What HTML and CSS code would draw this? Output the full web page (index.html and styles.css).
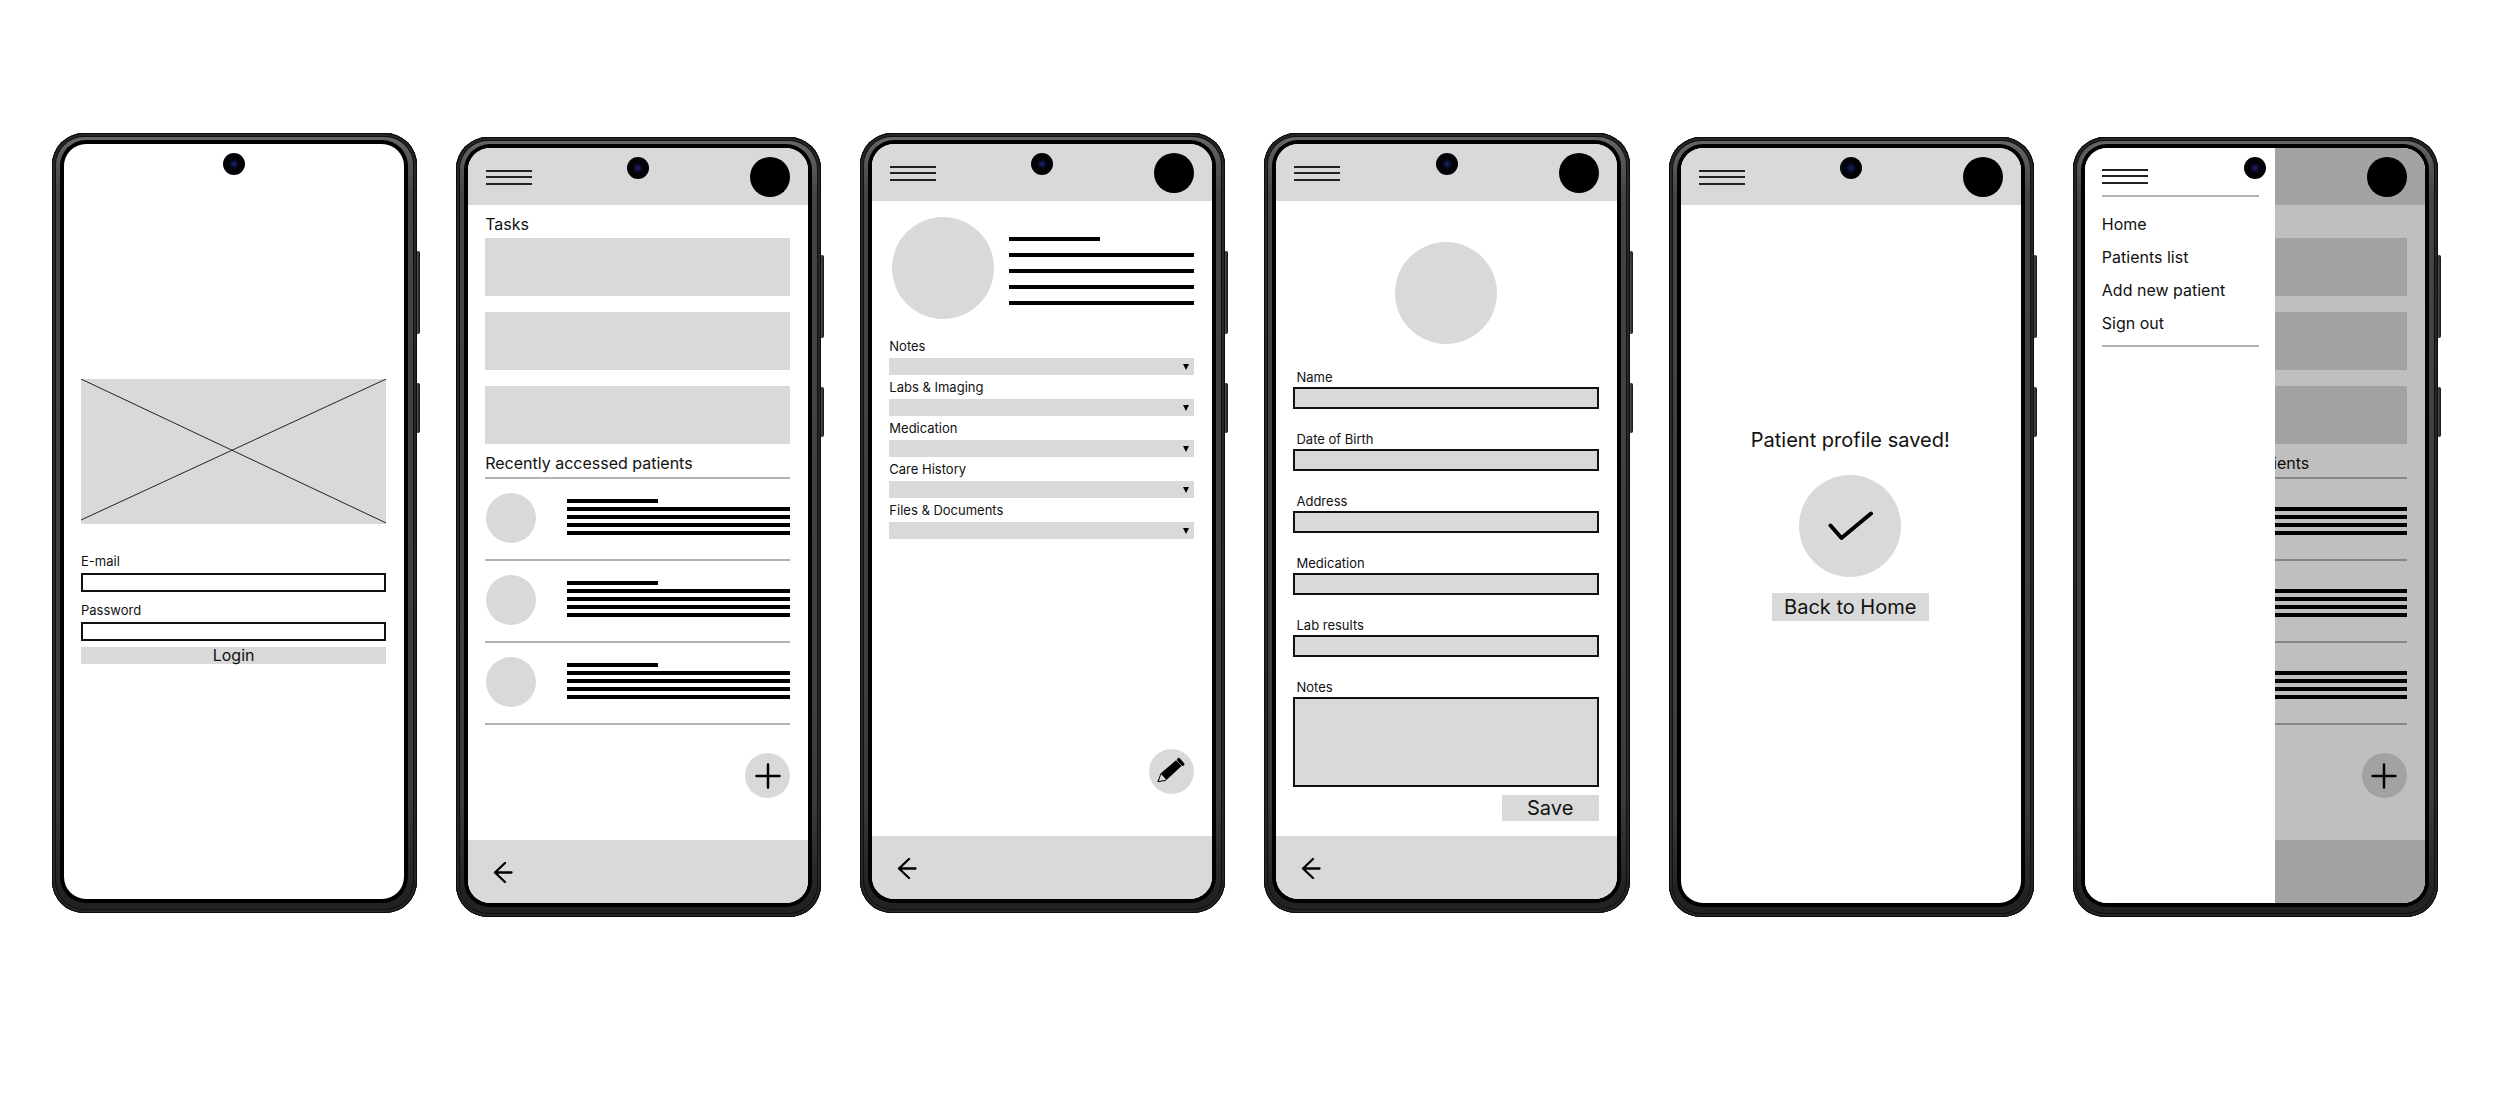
FILE: index.html
```html
<!DOCTYPE html>
<html lang="en">
<head>
    <meta charset="UTF-8">
    <meta name="viewport" content="width=device-width, initial-scale=1">
    <title>Patient App Wireframes</title>
    <link rel="stylesheet" href="styles.css">
</head>
<body>
    <!-- Shared icons -->
    <svg class="icon-defs" aria-hidden="true">
        <symbol id="icon-menu" viewBox="0 0 46 16">
            <path d="M0 2h46M0 8h46M0 15h46" stroke="#222" stroke-width="2"/>
        </symbol>
        <symbol id="icon-back" viewBox="0 0 20 22">
            <path d="M12 2 2 11.500 12 21M2 11.500h16.500" fill="none" stroke="#000" stroke-width="2.300" stroke-linecap="round" stroke-linejoin="round"/>
        </symbol>
        <symbol id="icon-plus" viewBox="0 0 26 26">
            <path d="M13 1.500v23M1.500 13h23" stroke="#000" stroke-width="2.500" stroke-linecap="round"/>
        </symbol>
        <symbol id="icon-pencil" viewBox="0 0 45 45">
            <path d="M27 11.300 32.500 17 17.500 31 11.500 24.500Z"/>
            <path d="M11.800 25 9 32.700 17 31.300" fill="none" stroke="#000" stroke-width="1"/>
            <path d="M9 30.500 8.500 33.200 11 32.500Z"/>
            <path d="M29.700 10.700 33.600 15.200" stroke="#000" stroke-width="3.500" stroke-linecap="round"/>
        </symbol>
        <symbol id="icon-check" viewBox="0 0 46 30">
            <path d="M3.500 14.500 14.500 27 44 2.500" fill="none" stroke="#000" stroke-width="4" stroke-linecap="round" stroke-linejoin="round"/>
        </symbol>
    </svg>

    <main class="board">
        <!-- Login -->
        <section class="phone">
            <div class="screen">
                <span class="camera"></span>
                <form class="content login">
                    <svg class="logo" viewBox="0 0 306 145" preserveAspectRatio="none" role="img" aria-label="Logo">
                        <path d="M0 0 306 144M0 141 306 0" stroke="#222" stroke-width="1"/>
                    </svg>
                    <div class="login-field">
                        <label for="email">E-mail</label>
                        <input id="email" type="email">
                    </div>
                    <div class="login-field">
                        <label for="password">Password</label>
                        <input id="password" type="password">
                    </div>
                    <button class="btn btn-login" type="button">Login</button>
                </form>
            </div>
        </section>

        <!-- Home -->
        <section class="phone low">
            <div class="screen">
                <span class="camera"></span>
                <header class="topbar">
                    <button class="icon-btn" type="button" aria-label="Menu"><svg class="menu-icon"><use href="#icon-menu"/></svg></button>
                    <button class="account" type="button" aria-label="Account"></button>
                </header>
                <div class="content">
                    <h2>Tasks</h2>
                    <div class="tasks">
                        <div class="task"></div>
                        <div class="task"></div>
                        <div class="task"></div>
                    </div>
                    <h2>Recently accessed patients</h2>
                    <ul class="patients">
                        <li>
                            <span class="avatar"></span>
                            <div class="lines"><i></i><i></i><i></i><i></i><i></i></div>
                        </li>
                        <li>
                            <span class="avatar"></span>
                            <div class="lines"><i></i><i></i><i></i><i></i><i></i></div>
                        </li>
                        <li>
                            <span class="avatar"></span>
                            <div class="lines"><i></i><i></i><i></i><i></i><i></i></div>
                        </li>
                    </ul>
                    <button class="fab" type="button" aria-label="Add patient"><svg class="plus-icon"><use href="#icon-plus"/></svg></button>
                </div>
                <footer class="bottombar">
                    <button class="icon-btn" type="button" aria-label="Back"><svg class="back-icon"><use href="#icon-back"/></svg></button>
                </footer>
            </div>
        </section>

        <!-- Patient profile -->
        <section class="phone">
            <div class="screen">
                <span class="camera"></span>
                <header class="topbar">
                    <button class="icon-btn" type="button" aria-label="Menu"><svg class="menu-icon"><use href="#icon-menu"/></svg></button>
                    <button class="account" type="button" aria-label="Account"></button>
                </header>
                <div class="content">
                    <div class="profile">
                        <span class="photo"></span>
                        <div class="lines wide"><i></i><i></i><i></i><i></i><i></i></div>
                    </div>
                    <div class="sections">
                        <label for="s-notes">Notes</label>
                        <select id="s-notes"><option></option></select>
                        <label for="s-labs">Labs &amp; Imaging</label>
                        <select id="s-labs"><option></option></select>
                        <label for="s-medication">Medication</label>
                        <select id="s-medication"><option></option></select>
                        <label for="s-history">Care History</label>
                        <select id="s-history"><option></option></select>
                        <label for="s-files">Files &amp; Documents</label>
                        <select id="s-files"><option></option></select>
                    </div>
                    <button class="fab" type="button" aria-label="Edit"><svg class="pencil-icon"><use href="#icon-pencil"/></svg></button>
                </div>
                <footer class="bottombar">
                    <button class="icon-btn" type="button" aria-label="Back"><svg class="back-icon"><use href="#icon-back"/></svg></button>
                </footer>
            </div>
        </section>

        <!-- Add new patient -->
        <section class="phone">
            <div class="screen">
                <span class="camera"></span>
                <header class="topbar">
                    <button class="icon-btn" type="button" aria-label="Menu"><svg class="menu-icon"><use href="#icon-menu"/></svg></button>
                    <button class="account" type="button" aria-label="Account"></button>
                </header>
                <form class="content patient-form">
                    <span class="photo"></span>
                    <div class="field">
                        <label for="name">Name</label>
                        <input id="name" type="text">
                    </div>
                    <div class="field">
                        <label for="dob">Date of Birth</label>
                        <input id="dob" type="text">
                    </div>
                    <div class="field">
                        <label for="address">Address</label>
                        <input id="address" type="text">
                    </div>
                    <div class="field">
                        <label for="medication">Medication</label>
                        <input id="medication" type="text">
                    </div>
                    <div class="field">
                        <label for="lab">Lab results</label>
                        <input id="lab" type="text">
                    </div>
                    <div class="field">
                        <label for="notes">Notes</label>
                        <textarea id="notes"></textarea>
                    </div>
                    <button class="btn btn-save" type="button">Save</button>
                </form>
                <footer class="bottombar">
                    <button class="icon-btn" type="button" aria-label="Back"><svg class="back-icon"><use href="#icon-back"/></svg></button>
                </footer>
            </div>
        </section>

        <!-- Saved confirmation -->
        <section class="phone low">
            <div class="screen">
                <span class="camera"></span>
                <header class="topbar">
                    <button class="icon-btn" type="button" aria-label="Menu"><svg class="menu-icon"><use href="#icon-menu"/></svg></button>
                    <button class="account" type="button" aria-label="Account"></button>
                </header>
                <div class="content saved">
                    <p>Patient profile saved!</p>
                    <span class="photo"><svg class="check-icon"><use href="#icon-check"/></svg></span>
                    <button class="btn btn-home" type="button">Back to Home</button>
                </div>
            </div>
        </section>

        <!-- Home with the menu open -->
        <section class="phone low">
            <div class="screen">
                <span class="camera"></span>
                <header class="topbar">
                    <span></span>
                    <button class="account" type="button" aria-label="Account"></button>
                </header>
                <div class="content">
                    <h2>Tasks</h2>
                    <div class="tasks">
                        <div class="task"></div>
                        <div class="task"></div>
                        <div class="task"></div>
                    </div>
                    <h2>Recently accessed patients</h2>
                    <ul class="patients">
                        <li>
                            <span class="avatar"></span>
                            <div class="lines"><i></i><i></i><i></i><i></i><i></i></div>
                        </li>
                        <li>
                            <span class="avatar"></span>
                            <div class="lines"><i></i><i></i><i></i><i></i><i></i></div>
                        </li>
                        <li>
                            <span class="avatar"></span>
                            <div class="lines"><i></i><i></i><i></i><i></i><i></i></div>
                        </li>
                    </ul>
                    <button class="fab" type="button" aria-label="Add patient"><svg class="plus-icon"><use href="#icon-plus"/></svg></button>
                </div>
                <footer class="bottombar"></footer>
                <div class="backdrop"></div>
                <nav class="drawer">
                    <button class="icon-btn" type="button" aria-label="Close menu"><svg class="menu-icon"><use href="#icon-menu"/></svg></button>
                    <ul>
                        <li><a href="#">Home</a></li>
                        <li><a href="#">Patients list</a></li>
                        <li><a href="#">Add new patient</a></li>
                        <li><a href="#">Sign out</a></li>
                    </ul>
                </nav>
            </div>
        </section>
    </main>
</body>
</html>
```
FILE: styles.css
```css
* {
    box-sizing: border-box;
}

body {
    margin: 0;
    background-color: #fff;
    color: #111;
    font-family: Inter, "Liberation Sans", sans-serif;
    font-size: 16px;
}

h2, p, ul {
    margin: 0;
    padding: 0;
    font-weight: 400;
}

ul {
    list-style: none;
}

button, input, select, textarea {
    font-family: inherit;
    color: inherit;
    margin: 0;
    padding: 0;
    border: 0;
    border-radius: 0;
}

.icon-defs {
    display: none;
}

.board {
    display: grid;
    grid-template-columns: repeat(6, 1fr);
    align-items: start;
    gap: 39px;
    padding: 133px 62px 133px 52px;
}

/* Phone frame */
.phone {
    position: relative;
    padding: 11px 13px 14px 12px;
    border-radius: 32px;
    background: linear-gradient(to bottom, #686868 0, #444 60px, #3c3c3c 85%, #222 97%);
    box-shadow: inset 0 0 0 1px #0c0c0c, inset 0 0 0 3px #262626, inset 0 0 0 4px #101010;
}

.phone.low {
    margin-top: 4px;
}

/* Side buttons */
.phone::before,
.phone::after {
    content: "";
    position: absolute;
    right: -3px;
    width: 3px;
    border-radius: 0 2px 2px 0;
    background: linear-gradient(to right, #555, #111);
}

.phone::before {
    top: 118px;
    height: 83px;
}

.phone::after {
    top: 250px;
    height: 50px;
}

.screen {
    position: relative;
    display: flex;
    flex-direction: column;
    min-height: 755px;
    border-radius: 22px;
    overflow: hidden;
    background-color: #fff;
    box-shadow: 0 0 0 4px #000;
}

.camera {
    position: absolute;
    top: 9px;
    left: 50%;
    z-index: 3;
    width: 22px;
    height: 22px;
    margin-left: -11px;
    border-radius: 50%;
    background: radial-gradient(circle, #1c2a7a 0, #0b0d33 3px, #040408 5px, #040408 100%);
}

.topbar {
    display: flex;
    justify-content: space-between;
    align-items: center;
    height: 57px;
    padding: 0 18px;
    background-color: #d9d9d9;
}

.bottombar {
    display: flex;
    align-items: center;
    height: 63px;
    padding: 0 25px;
    background-color: #d9d9d9;
}

.icon-btn {
    display: block;
    background: none;
}

.icon-btn svg,
.fab svg {
    display: block;
}

.menu-icon {
    width: 46px;
    height: 16px;
}

.back-icon {
    width: 20px;
    height: 22px;
}

.plus-icon {
    width: 26px;
    height: 26px;
}

.pencil-icon {
    width: 45px;
    height: 45px;
}

.check-icon {
    width: 46px;
    height: 30px;
}

.account {
    width: 40px;
    height: 40px;
    border-radius: 50%;
    background-color: #000;
}

.content {
    flex: 1;
    display: flex;
    flex-direction: column;
    padding: 0 18px 0 17px;
}

.btn {
    background-color: #d9d9d9;
    font-size: 20px;
    line-height: 26px;
}

.fab {
    display: flex;
    justify-content: center;
    align-items: center;
    align-self: flex-end;
    width: 45px;
    height: 45px;
    margin-top: auto;
    margin-bottom: 42px;
    border-radius: 50%;
    background-color: #d9d9d9;
}

/* Login */
.login {
    padding-top: 235px;
}

.logo {
    width: 100%;
    height: 145px;
    margin-bottom: 25px;
    background-color: #d9d9d9;
}

.login-field {
    display: flex;
    flex-direction: column;
    margin-bottom: 6px;
    font-size: 13px;
    line-height: 24px;
}

.login-field input {
    height: 19px;
    border: 2px solid #111;
    background-color: #fff;
}

.btn-login {
    height: 17px;
    font-size: 16px;
    line-height: 17px;
}

/* Home */
h2 {
    padding: 9px 0 4px;
    font-size: 16px;
    line-height: 20px;
}

.tasks {
    display: grid;
    gap: 16px;
}

.task {
    height: 58px;
    background-color: #d9d9d9;
}

.patients {
    border-top: 2px solid #b3b3b3;
}

.patients li {
    display: flex;
    gap: 31px;
    padding: 14px 0 16px 1px;
    border-bottom: 2px solid #b3b3b3;
}

.avatar {
    width: 50px;
    height: 50px;
    border-radius: 50%;
    background-color: #d9d9d9;
}

.lines {
    flex: 1;
    display: flex;
    flex-direction: column;
    gap: 4px;
    padding-top: 6px;
}

.lines i {
    height: 4px;
    background-color: #000;
}

.lines i:first-child {
    width: 91px;
}

/* Patient profile */
.profile {
    display: flex;
    align-items: center;
    gap: 15px;
    padding: 16px 0 15px 3px;
}

.photo {
    display: flex;
    justify-content: center;
    align-items: center;
    width: 102px;
    height: 102px;
    border-radius: 50%;
    background-color: #d9d9d9;
}

.lines.wide {
    gap: 12px;
}

.sections {
    display: flex;
    flex-direction: column;
    font-size: 13px;
    line-height: 24px;
}

.sections select {
    appearance: none;
    height: 17px;
    background: #d9d9d9 url("data:image/svg+xml,%3Csvg xmlns='http://www.w3.org/2000/svg' viewBox='0 0 6 6'%3E%3Cpath d='M0 0h6L3 6z'/%3E%3C/svg%3E") no-repeat right 5px center / 6px 6px;
}

/* Patient form */
.patient-form {
    padding-top: 41px;
}

.patient-form .photo {
    align-self: center;
    margin-bottom: 23px;
}

.field {
    display: flex;
    flex-direction: column;
    margin-bottom: 20px;
    font-size: 13px;
    line-height: 20px;
}

.field label {
    padding-left: 3px;
}

.field input,
.field textarea {
    height: 22px;
    border: 2px solid #111;
    background-color: #d9d9d9;
    resize: none;
}

.field textarea {
    height: 90px;
}

.field:last-of-type {
    margin-bottom: 8px;
}

.btn-save {
    align-self: flex-end;
    width: 97px;
}

/* Saved */
.saved {
    align-items: center;
    padding-top: 223px;
    font-size: 20px;
    line-height: 24px;
}

.saved .photo {
    margin: 23px 0 16px;
}

.btn-home {
    width: 157px;
    line-height: 28px;
}

/* Menu drawer */
.backdrop {
    position: absolute;
    inset: 0;
    z-index: 1;
    background-color: rgba(0, 0, 0, 0.25);
}

.drawer {
    position: absolute;
    top: 0;
    bottom: 0;
    left: 0;
    z-index: 2;
    width: 190px;
    padding: 20px 16px 0 17px;
    background-color: #fff;
}

.drawer ul {
    margin-top: 11px;
    padding: 11px 0 5px;
    border-top: 2px solid #b3b3b3;
    border-bottom: 2px solid #b3b3b3;
}

.drawer a {
    display: block;
    color: inherit;
    line-height: 33px;
    text-decoration: none;
}
```
